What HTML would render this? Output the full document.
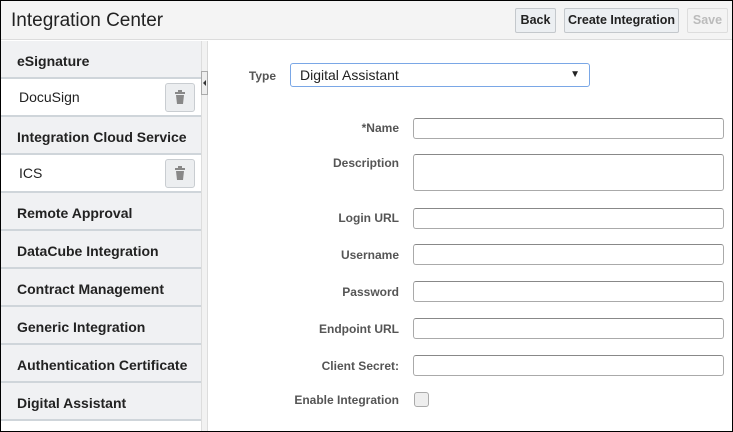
<!DOCTYPE html><html><head><style>
*{box-sizing:border-box;margin:0;padding:0}
body{width:733px;height:432px;overflow:hidden;font-family:"Liberation Sans",Arial,sans-serif;background:#fff;position:relative}
.frame{position:absolute;left:0;top:0;width:733px;height:432px;border:1px solid #000}
.hdr{position:absolute;left:1px;top:1px;width:731px;height:39px;background:#f4f4f4;border-bottom:1px solid #dcdcdc}
.title{position:absolute;left:10px;top:9px;font-size:19px;color:#222}
.btn{position:absolute;top:7px;height:25px;border:1px solid #c4c8cc;border-radius:2px;background:#eceff2;font-size:12.5px;font-weight:bold;color:#222;text-align:center;line-height:23px}
.left{position:absolute;left:1px;top:41px;width:200px;height:390px;background:#fff}
.h{position:absolute;left:0;width:200px;height:38px;background:#f0f1f3;border-bottom:2px solid #cfd5da;font-size:14px;font-weight:bold;color:#222;padding-left:16px;line-height:40px}
.r{position:absolute;left:0;width:200px;height:38px;background:#fff;border-bottom:2px solid #cfd5da;font-size:14px;color:#222;padding-left:18px;line-height:36px}
.trash{position:absolute;right:6px;top:4px;width:30px;height:29px;border:1px solid #c9cdd1;border-radius:3px;background:#eceef0}
.split{position:absolute;left:201px;top:41px;width:7px;height:390px;background:#f2f2f2;border-left:1px solid #ddd;border-right:1px solid #ddd}
.tog{position:absolute;left:201px;top:71px;width:7px;height:24px;background:#eee;border:1px solid #aaa}
.lbl{position:absolute;width:170px;left:229px;text-align:right;font-size:12px;font-weight:bold;color:#555}
.in{position:absolute;left:413px;width:311px;height:21px;border:1px solid #aaa;border-top-color:#888;border-radius:3px;background:#fff}
</style></head><body>
<div class="hdr"><div class="title">Integration Center</div>
<div class="btn" style="left:514px;width:41px">Back</div>
<div class="btn" style="left:563px;width:115px">Create Integration</div>
<div class="btn" style="left:686px;width:41px;color:#bbb;background:#f3f3f3;border-color:#ddd">Save</div></div>
<div class="left">
<div class="h" style="top:0">eSignature</div>
<div class="r" style="top:38px">DocuSign<div class="trash"><svg width="28" height="27" viewBox="0 0 28 27"><rect x="9" y="8" width="10" height="2" fill="#888"/><rect x="12" y="6" width="4" height="2" fill="#888"/><path d="M10 11h8l-1 9h-6z" fill="#888"/></svg></div></div>
<div class="h" style="top:76px">Integration Cloud Service</div>
<div class="r" style="top:114px">ICS<div class="trash"><svg width="28" height="27" viewBox="0 0 28 27"><rect x="9" y="8" width="10" height="2" fill="#888"/><rect x="12" y="6" width="4" height="2" fill="#888"/><path d="M10 11h8l-1 9h-6z" fill="#888"/></svg></div></div>
<div class="h" style="top:152px">Remote Approval</div>
<div class="h" style="top:190px">DataCube Integration</div>
<div class="h" style="top:228px">Contract Management</div>
<div class="h" style="top:266px">Generic Integration</div>
<div class="h" style="top:304px">Authentication Certificate</div>
<div class="h" style="top:342px">Digital Assistant</div>
</div>
<div class="split"></div>
<div class="tog"><svg width="5" height="22" viewBox="0 0 5 22"><path d="M4 8v6l-3-3z" fill="#333"/></svg></div>
<div class="lbl" style="top:69px;left:106px">Type</div>
<div style="position:absolute;left:290px;top:63px;width:300px;height:24px;border:1px solid #7aa7e6;border-radius:3px;font-size:14px;color:#222;padding-left:9px;line-height:22px">Digital Assistant<span style="position:absolute;right:9px;top:0;font-size:10px">▼</span></div>
<div class="lbl" style="top:121px">*Name</div><div class="in" style="top:118px"></div>
<div class="lbl" style="top:156px">Description</div><div class="in" style="top:154px;height:37px"></div>
<div class="lbl" style="top:211px">Login URL</div><div class="in" style="top:208px"></div>
<div class="lbl" style="top:248px">Username</div><div class="in" style="top:244px"></div>
<div class="lbl" style="top:285px">Password</div><div class="in" style="top:281px"></div>
<div class="lbl" style="top:322px">Endpoint URL</div><div class="in" style="top:318px"></div>
<div class="lbl" style="top:359px">Client Secret:</div><div class="in" style="top:355px"></div>
<div class="lbl" style="top:393px">Enable Integration</div>
<div style="position:absolute;left:414px;top:392px;width:15px;height:15px;border:1px solid #aaa;border-radius:3px;background:#eee"></div>
<div class="frame"></div>
</body></html>
